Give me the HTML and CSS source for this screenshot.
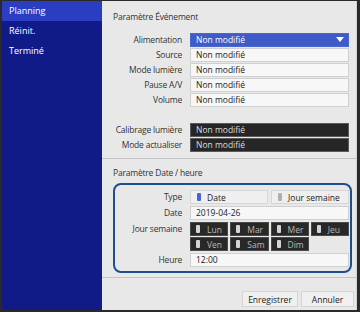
FILE: index.html
```html
<html lang="fr">
<head>
    <meta charset="UTF-8">
    <title>Planning</title>
    <link rel="stylesheet" href="styles.css">
</head>
<body>
    <div class="frame">
        <div class="sidebar">
            <div class="menu-item selected">Planning</div>
            <div class="menu-item">Réinit.</div>
            <div class="menu-item">Terminé</div>
        </div>

        <div class="main">
            <div class="section event">
                <div class="section-title">Paramètre Événement</div>

                <div class="row">
                    <div class="label">Alimentation</div>
                    <div class="field select">Non modifié<span class="arrow"></span></div>
                </div>
                <div class="row">
                    <div class="label">Source</div>
                    <div class="field">Non modifié</div>
                </div>
                <div class="row">
                    <div class="label">Mode lumière</div>
                    <div class="field">Non modifié</div>
                </div>
                <div class="row">
                    <div class="label">Pause A/V</div>
                    <div class="field">Non modifié</div>
                </div>
                <div class="row">
                    <div class="label">Volume</div>
                    <div class="field">Non modifié</div>
                </div>

                <div class="row spaced">
                    <div class="label">Calibrage lumière</div>
                    <div class="field dark">Non modifié</div>
                </div>
                <div class="row">
                    <div class="label">Mode actualiser</div>
                    <div class="field dark">Non modifié</div>
                </div>
            </div>

            <div class="section datetime">
                <div class="section-title">Paramètre Date / heure</div>
                <div class="date-box">
                    <div class="row">
                        <div class="label">Type</div>
                        <div class="options">
                            <div class="option"><span class="mark on"></span>Date</div>
                            <div class="option"><span class="mark"></span>Jour semaine</div>
                        </div>
                    </div>
                    <div class="row">
                        <div class="label">Date</div>
                        <div class="field">2019-04-26</div>
                    </div>
                    <div class="row tall">
                        <div class="label">Jour semaine</div>
                        <div class="days">
                            <div class="day"><span class="mark"></span>Lun</div>
                            <div class="day"><span class="mark"></span>Mar</div>
                            <div class="day"><span class="mark"></span>Mer</div>
                            <div class="day"><span class="mark"></span>Jeu</div>
                            <div class="day"><span class="mark"></span>Ven</div>
                            <div class="day"><span class="mark"></span>Sam</div>
                            <div class="day"><span class="mark"></span>Dim</div>
                        </div>
                    </div>
                    <div class="row">
                        <div class="label">Heure</div>
                        <div class="field">12:00</div>
                    </div>
                </div>
            </div>

            <div class="footer">
                <button class="btn">Enregistrer</button>
                <button class="btn">Annuler</button>
            </div>
        </div>
    </div>
</body>
</html>
```

FILE: styles.css
```css
body {
    margin: 0;
    background-color: #2a2a2a;
    font-family: "Open Sans", "Noto Sans", Arial, sans-serif;
    font-size: 8.5px;
}

.frame {
    display: flex;
    height: 312px;
    padding: 1px 3px 2px 2px;
    box-sizing: border-box;
}

/******/
/* SIDEBAR */
/*******/

.sidebar {
    width: 100px;
    background-color: #111b88;
}

.menu-item {
    height: 20px;
    line-height: 20px;
    padding-left: 7px;
    color: #ffffff;
    font-size: 9px;
}

.menu-item.selected {
    background-color: #2b3ec2;
}

/******/
/* MAIN */
/*******/

.main {
    flex: 1;
    display: flex;
    flex-direction: column;
    background-color: #e8e8e8;
    border-right: 1px solid #d2d2d2;
}

.section-title {
    height: 14px;
    line-height: 14px;
    padding-left: 11px;
    color: #333333;
    letter-spacing: -0.2px;
}

.section.event {
    padding-top: 9px;
    padding-bottom: 5px;
    border-bottom: 1px solid #c4c4c4;
}

.section.event .section-title {
    margin-bottom: 9px;
}

.row {
    display: flex;
    height: 14px;
    margin-bottom: 1px;
}

.row.spaced {
    margin-top: 16px;
}

.label {
    width: 88px;
    padding-right: 8px;
    box-sizing: border-box;
    text-align: right;
    line-height: 14px;
    white-space: nowrap;
    letter-spacing: -0.2px;
    color: #333333;
}

.field {
    position: relative;
    width: 159px;
    box-sizing: border-box;
    padding-left: 5px;
    line-height: 12px;
    white-space: nowrap;
    background-color: #f7f7f7;
    border: 1px solid #d0d0d0;
    color: #222222;
}

.field.select {
    background-color: #3e5bc7;
    border-color: #4a66cf;
    color: #ffffff;
}

.arrow {
    position: absolute;
    right: 4px;
    top: 3px;
    border-left: 4px solid transparent;
    border-right: 4px solid transparent;
    border-top: 5px solid #ffffff;
}

.field.dark {
    background-color: #262626;
    border-color: #5a5a5a;
    color: #dddddd;
}

/* date / heure */

.section.datetime {
    flex: 1;
    padding-top: 7px;
}

.date-box {
    margin: 3px 4px 0 11px;
    padding: 5px 1px 4px 0;
    border: 2px solid #1d4f8f;
    border-radius: 8px;
}

.date-box .label {
    width: 75px;
}

.date-box .row {
    margin-bottom: 2px;
}

.date-box .row:last-child {
    margin-bottom: 0;
}

.date-box .row.tall {
    height: 29px;
}

.options {
    display: flex;
    gap: 3px;
    width: 159px;
}

.option {
    flex: 1;
    display: flex;
    align-items: center;
    white-space: nowrap;
    background-color: #efefef;
    border: 1px solid #d6d6d6;
    color: #222222;
}

.mark {
    display: inline-block;
    width: 4px;
    height: 8px;
    margin: 0 6px 0 6px;
    border-radius: 1px;
    background-color: #b0b0b0;
}

.mark.on {
    background-color: #4465d8;
}

.days {
    display: grid;
    grid-template-columns: repeat(4, 1fr);
    gap: 1px 2px;
    width: 159px;
}

.day {
    display: flex;
    align-items: center;
    height: 14px;
    background-color: #282828;
    border: 1px solid #4a4a4a;
    box-sizing: border-box;
    color: #b8b8b8;
}

.day .mark {
    background-color: #d4d4d4;
    margin: 0 7px 0 5px;
}

/******/
/* FOOTER */
/*******/

.footer {
    height: 33px;
    box-sizing: border-box;
    border-top: 1px solid #c4c4c4;
    display: flex;
    justify-content: flex-end;
    align-items: flex-end;
    gap: 3px;
    padding: 0 2px 3px 0;
}

.btn {
    height: 16px;
    padding: 0;
    font-family: "Open Sans", "Noto Sans", Arial, sans-serif;
    font-size: 8.5px;
    color: #222222;
    background-color: #f0f0f0;
    border: 1px solid #d4d4d4;
}

.btn:first-child {
    width: 56px;
}

.btn:last-child {
    width: 53px;
}
```
